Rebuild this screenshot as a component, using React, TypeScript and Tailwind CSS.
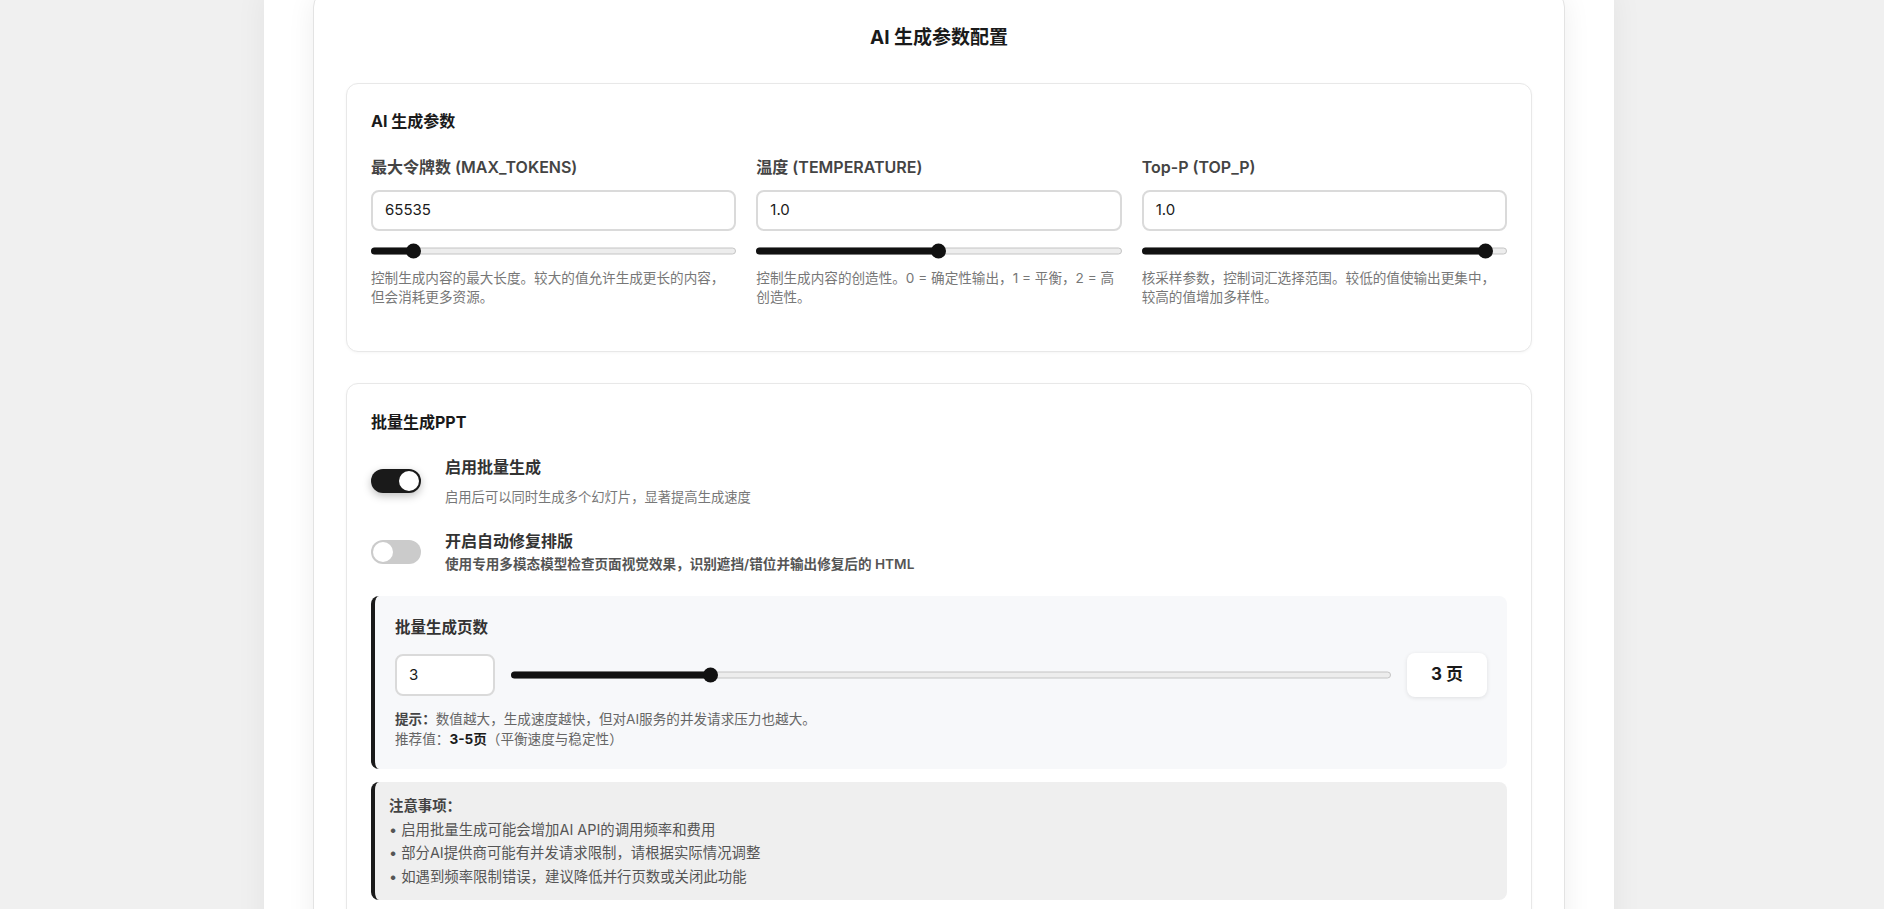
import React from 'react';

interface Param {
  label: string;
  value: string;
  frac: number;
  help: string;
}

const params: Param[] = [
  {
    label: '最大令牌数 (MAX_TOKENS)',
    value: '65535',
    frac: 0.1,
    help: '控制生成内容的最大长度。较大的值允许生成更长的内容，但会消耗更多资源。',
  },
  {
    label: '温度 (TEMPERATURE)',
    value: '1.0',
    frac: 0.5,
    help: '控制生成内容的创造性。0 = 确定性输出，1 = 平衡，2 = 高创造性。',
  },
  {
    label: 'Top-P (TOP_P)',
    value: '1.0',
    frac: 0.96,
    help: '核采样参数，控制词汇选择范围。较低的值使输出更集中，较高的值增加多样性。',
  },
];

const notes = [
  '启用批量生成可能会增加AI API的调用频率和费用',
  '部分AI提供商可能有并发请求限制，请根据实际情况调整',
  '如遇到频率限制错误，建议降低并行页数或关闭此功能',
];

const Slider: React.FC<{ frac: number }> = ({ frac }) => (
  <div className="relative h-4 w-full">
    <div className="absolute left-0 right-0 top-1/2 h-[7px] -translate-y-1/2 rounded-full border border-[#c4c4c4] bg-[#ededed]" />
    <div
      className="absolute left-0 top-1/2 h-[7px] -translate-y-1/2 rounded-full bg-[#111]"
      style={{ width: `calc(${frac} * (100% - 15px) + 8px)` }}
    />
    <div
      className="absolute top-1/2 h-[15px] w-[15px] -translate-y-1/2 rounded-full bg-[#111]"
      style={{ left: `calc(${frac} * (100% - 15px))` }}
    />
  </div>
);

const Toggle: React.FC<{ on: boolean }> = ({ on }) => (
  <div
    className={
      on
        ? 'flex h-[24px] w-[50px] shrink-0 items-center justify-end rounded-full bg-[#1a1a1a] px-[2px] shadow-[0_3px_8px_rgba(0,0,0,0.25)]'
        : 'flex h-[24px] w-[50px] shrink-0 items-center justify-start rounded-full bg-[#cbcbcb] px-[2px]'
    }
  >
    <div className="h-[20px] w-[20px] rounded-full bg-white" />
  </div>
);

export default function App() {
  return (
    <div className="min-h-screen bg-[#f0f0f0] font-['Inter','Noto_Sans_CJK_SC',sans-serif] text-[#1a1a1a]">
      <div className="ml-[264px] min-h-screen w-[1350px] bg-white px-[49px] shadow-[0_0_30px_rgba(0,0,0,0.06)]">
        <div className="-mt-[9px] rounded-2xl border border-[#e3e3e3] bg-white p-8 shadow-[0_4px_28px_rgba(0,0,0,0.07)]">
          <h2 className="mb-[31px] text-center text-[19px] font-bold leading-[28px] text-[#1a1a1a]">AI 生成参数配置</h2>

          {/* AI 参数 */}
          <div className="rounded-xl border border-[#e8e8e8] bg-white p-6 shadow-[0_1px_3px_rgba(0,0,0,0.04)]">
            <h3 className="mb-[22px] text-[16px] font-bold leading-[26px]">AI 生成参数</h3>
            <div className="grid grid-cols-3 gap-x-5">
              {params.map((p) => (
                <div key={p.label} className="mb-5">
                  <label className="mb-3 block text-[16px] font-semibold leading-[22px] text-[#444]">{p.label}</label>
                  <div className="flex h-[41px] items-center rounded-lg border-2 border-[#dadada] bg-white px-3 text-[15px] text-[#1a1a1a]">
                    {p.value}
                  </div>
                  <div className="mt-3">
                    <Slider frac={p.frac} />
                  </div>
                  <p className="mt-[10px] text-[13.6px] leading-[19px] text-[#777]">{p.help}</p>
                </div>
              ))}
            </div>
          </div>

          {/* 批量生成 */}
          <div className="mt-[31px] rounded-xl border border-[#e8e8e8] bg-white p-6 shadow-[0_1px_3px_rgba(0,0,0,0.04)]">
            <h3 className="mb-[19px] text-[16px] font-bold leading-[28px]">批量生成PPT</h3>

            <div className="flex items-center gap-6">
              <Toggle on />
              <div>
                <div className="text-[16px] font-semibold leading-[24px] text-[#333]">启用批量生成</div>
                <div className="mt-2 text-[13.3px] leading-[20px] text-[#777]">启用后可以同时生成多个幻灯片，显著提高生成速度</div>
              </div>
            </div>

            <div className="mt-[22px] flex items-center gap-6">
              <Toggle on={false} />
              <div>
                <div className="text-[16px] font-semibold leading-[24px] text-[#333]">开启自动修复排版</div>
                <div className="text-[13.6px] font-semibold leading-[22px] text-[#555]">
                  使用专用多模态模型检查页面视觉效果，识别遮挡/错位并输出修复后的 HTML
                </div>
              </div>
            </div>

            <div className="mt-[21px] rounded-lg border-l-4 border-[#1a1a1a] bg-[#f7f8fa] p-5">
              <div className="mb-[13px] text-[15.5px] font-semibold leading-[24px] text-[#333]">批量生成页数</div>
              <div className="flex items-center gap-4">
                <div className="flex h-[42px] w-[100px] shrink-0 items-center rounded-lg border-2 border-[#dadada] bg-white px-3 text-[15px]">
                  3
                </div>
                <div className="flex-1">
                  <Slider frac={0.222} />
                </div>
                <div className="flex h-[44px] w-[80px] shrink-0 items-center justify-center rounded-lg bg-white text-[17px] font-bold shadow-[0_1px_4px_rgba(0,0,0,0.1)]">
                  3 页
                </div>
              </div>
              <div className="mt-3 text-[13.6px] leading-[20px] text-[#666]">
                <div>
                  <span className="font-bold text-[#444]">提示：</span>数值越大，生成速度越快，但对AI服务的并发请求压力也越大。
                </div>
                <div>
                  推荐值：<span className="font-bold text-[#1a1a1a]">3-5页</span>（平衡速度与稳定性）
                </div>
              </div>
            </div>

            <div className="mt-[13px] rounded-lg border-l-4 border-[#1a1a1a] bg-[#efefef] py-3 pl-[14px] pr-4 text-[14.4px] leading-[23.5px] text-[#555]">
              <div className="font-bold text-[#444]">注意事项：</div>
              {notes.map((n) => (
                <div key={n}>• {n}</div>
              ))}
            </div>

            <div className="h-6" />
          </div>
          <div className="h-8" />
        </div>
      </div>
    </div>
  );
}
